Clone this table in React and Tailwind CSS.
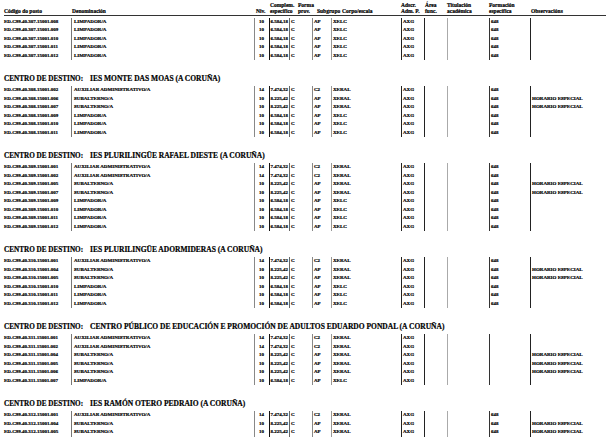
import React from "react";

const aux = (code, form = "648") => [code, "AUXILIAR ADMINISTRATIVO/A", "14", "7.474,32", "C", "C2", "XERAL", "AXG", "", "", form, ""];
const sub = (code, form = "648") => [code, "SUBALTERNO/A", "10", "8.225,42", "C", "AP", "XERAL", "AXG", "", "", form, "HORARIO ESPECIAL"];
const limp = (code, form = "648") => [code, "LIMPADOR/A", "10", "6.584,18", "C", "AP", "XELC", "AXG", "", "", form, ""];

const sections = [
  {
    title: null,
    rows: ["008", "009", "010", "011", "012"].map((n) => limp(`ED.C99.40.307.15001.${n}`)),
  },
  {
    title: "IES MONTE DAS MOAS (A CORUÑA)",
    rows: [
      aux("ED.C99.40.308.15001.002"),
      sub("ED.C99.40.308.15001.006"),
      sub("ED.C99.40.308.15001.007"),
      limp("ED.C99.40.308.15001.009"),
      limp("ED.C99.40.308.15001.010"),
      limp("ED.C99.40.308.15001.011"),
    ],
  },
  {
    title: "IES PLURILINGÜE RAFAEL DIESTE (A CORUÑA)",
    rows: [
      aux("ED.C99.40.309.15001.001"),
      aux("ED.C99.40.309.15001.002"),
      sub("ED.C99.40.309.15001.005"),
      sub("ED.C99.40.309.15001.007"),
      limp("ED.C99.40.309.15001.009"),
      limp("ED.C99.40.309.15001.010"),
      limp("ED.C99.40.309.15001.011"),
      limp("ED.C99.40.309.15001.012"),
    ],
  },
  {
    title: "IES PLURILINGÜE ADORMIDERAS (A CORUÑA)",
    rows: [
      aux("ED.C99.40.310.15001.001"),
      sub("ED.C99.40.310.15001.004"),
      sub("ED.C99.40.310.15001.005"),
      limp("ED.C99.40.310.15001.010"),
      limp("ED.C99.40.310.15001.011"),
      limp("ED.C99.40.310.15001.012"),
    ],
  },
  {
    title: "CENTRO PÚBLICO DE EDUCACIÓN E PROMOCIÓN DE ADULTOS EDUARDO PONDAL (A CORUÑA)",
    rows: [
      aux("ED.C99.40.311.15001.001", ""),
      aux("ED.C99.40.311.15001.002", ""),
      sub("ED.C99.40.311.15001.004", ""),
      sub("ED.C99.40.311.15001.005", ""),
      sub("ED.C99.40.311.15001.006", ""),
      limp("ED.C99.40.311.15001.007", ""),
    ],
  },
  {
    title: "IES RAMÓN OTERO PEDRAIO (A CORUÑA)",
    rows: [
      aux("ED.C99.40.312.15001.001"),
      sub("ED.C99.40.312.15001.004"),
      sub("ED.C99.40.312.15001.005"),
    ],
  },
];

const grid =
  "grid grid-cols-[67px_183px_15px_20px_23px_19px_70px_23px_23px_42px_41px_76px]";

// one class per column: left rule + text offset
const cellCls = [
  "",
  "border-l border-[#777] pl-[2px]",
  "border-l border-[#888] pl-[4px]",
  "border-l-[1.5px] border-[#111] text-right pr-[1px]",
  "border-l border-[#666] pl-[1px]",
  "border-l border-[#888] pl-[1px]",
  "border-l border-[#999] pl-[1px]",
  "border-l border-[#222] pl-[1px]",
  "border-l border-[#222] pl-[1px]",
  "border-l border-[#aaa] pl-[1px]",
  "border-l border-[#333] pl-[1px]",
  "border-l border-[#222] pl-[1px]",
];

// header labels sit a little off the data columns, so they get their own widths
const headCols = [
  ["", "Código do posto", "w-[68px]"],
  ["", "Denominación", "w-[184px]"],
  ["", "Niv.", "w-[14px]"],
  ["Complem.", "específico", "w-[28px]"],
  ["Forma", "prov.", "w-[19px]"],
  ["", "Subgrupo", "w-[25px]"],
  ["", "Corpo/escala", "w-[59px]"],
  ["Adscr.", "Adm. P.", "w-[24px]"],
  ["Área", "func.", "w-[22px]"],
  ["Titulación", "académica", "w-[42px]"],
  ["Formación", "específica", "w-[42px]"],
  ["", "Observacións", "w-[70px]"],
];

function HeadLabels() {
  return (
    <div className="flex pt-[1.5px] pb-[0.5px] border-b border-[#333] w-[602px] text-[5.5px]">
      {headCols.map(([a, b, w], i) => (
        <div key={i} className={`shrink-0 leading-[6.6px] whitespace-nowrap ${w}`}>
          <div className="h-[6.6px]">{a}</div>
          <div className="h-[6.6px]">{b}</div>
        </div>
      ))}
    </div>
  );
}

function Block({ rows }) {
  return (
    <div>
      {rows.map((r, i) => (
        <div key={i} className={grid}>
          {r.map((v, j) => (
            <div key={j} className={`h-[8.5px] leading-[8.5px] whitespace-nowrap ${cellCls[j]}`}>
              {v}
            </div>
          ))}
        </div>
      ))}
    </div>
  );
}

export default function App() {
  return (
    <div className="w-[615px] h-[439px] overflow-hidden bg-white pl-[4px] text-[5px] font-bold text-black font-['Liberation_Serif',serif] [-webkit-text-stroke:0.2px_#000]">
      <HeadLabels />
      <div className="mt-[1.5px]">
        {sections.map((s, i) => (
          <div key={i}>
            {s.title && (
              <div className="mt-[14px] mb-[2px] h-[10px] leading-[10px] text-[7.5px] whitespace-nowrap flex items-baseline">
                <span className="w-[86px] shrink-0 text-[7.2px]">CENTRO DE DESTINO:</span>
                <span>{s.title}</span>
              </div>
            )}
            <Block rows={s.rows} />
          </div>
        ))}
      </div>
    </div>
  );
}
